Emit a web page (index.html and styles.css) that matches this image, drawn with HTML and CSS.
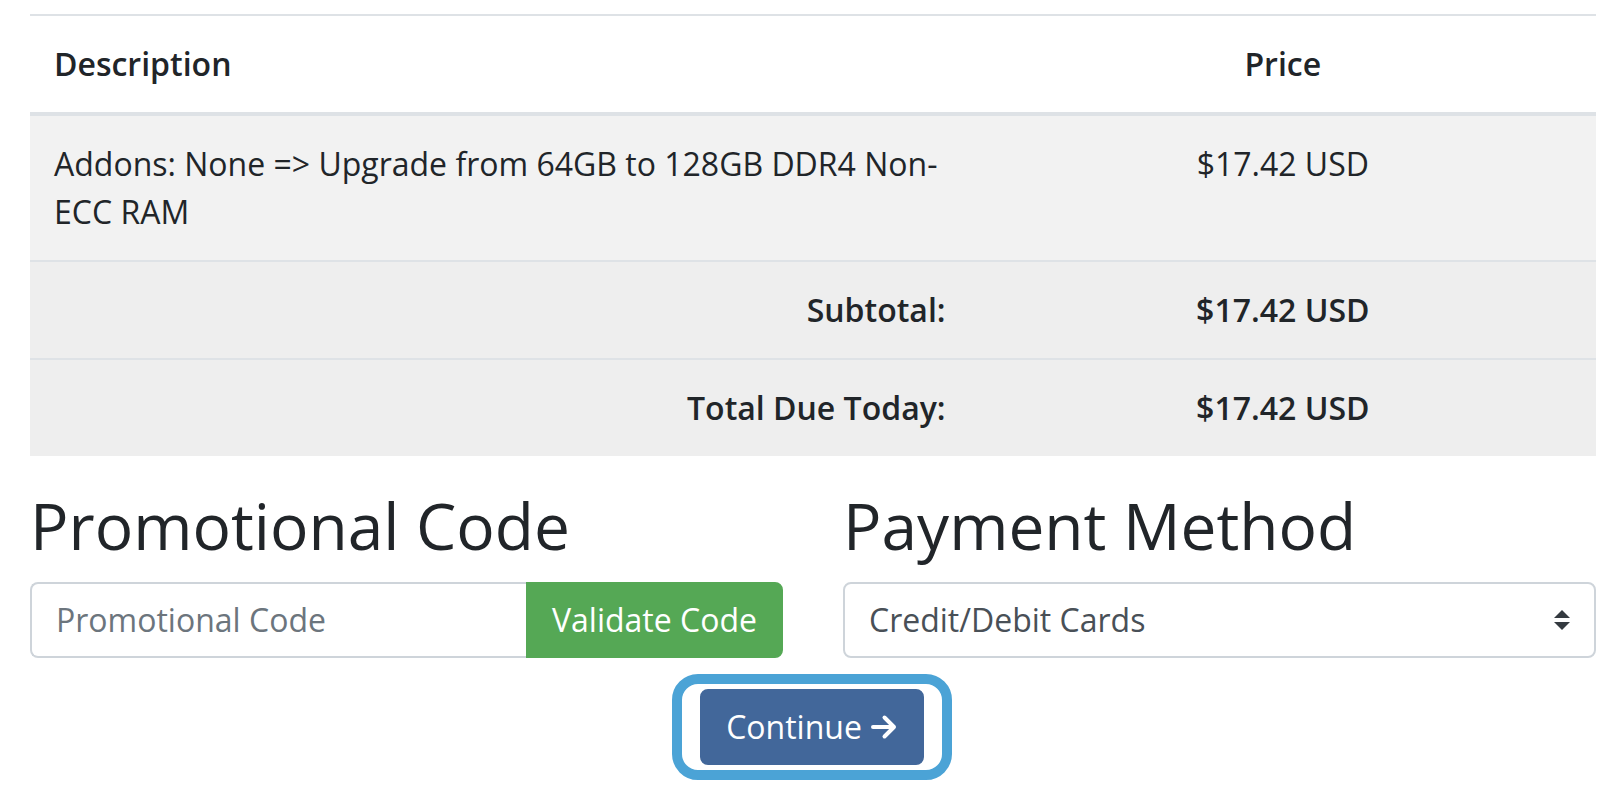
FILE: index.html
```html
<!DOCTYPE html>
<html lang="en">
<head>
<meta charset="utf-8">
<title>Order Summary</title>
<link rel="stylesheet" href="styles.css">
</head>
<body>
<div class="page">
  <table class="summary">
    <thead>
      <tr>
        <th class="col-desc">Description</th>
        <th class="col-price">Price</th>
      </tr>
    </thead>
    <tbody>
      <tr class="item">
        <td>Addons: None =&gt; Upgrade from 64GB to 128GB DDR4 Non-ECC RAM</td>
        <td class="center">$17.42 USD</td>
      </tr>
      <tr class="total">
        <td class="right strong">Subtotal:</td>
        <td class="center strong">$17.42 USD</td>
      </tr>
      <tr class="total">
        <td class="right strong">Total Due Today:</td>
        <td class="center strong">$17.42 USD</td>
      </tr>
    </tbody>
  </table>

  <div class="options">
    <div class="option">
      <h2 class="heading">Promotional Code</h2>
      <div class="input-group">
        <input class="control promo" type="text" placeholder="Promotional Code">
        <button class="btn-validate" type="button">Validate Code</button>
      </div>
    </div>
    <div class="option">
      <h2 class="heading">Payment Method</h2>
      <div class="select">
        <span class="select-text">Credit/Debit Cards</span>
        <svg class="select-caret" width="16" height="20" viewBox="0 0 4 5"><path d="M2 0L0 2h4zm0 5L0 3h4z" fill="#343a40"/></svg>
      </div>
    </div>
  </div>

  <div class="actions">
    <div class="focus-ring">
      <button class="btn-continue" type="button">Continue
        <svg class="arrow" width="28" height="26" viewBox="0 0 28 26"><path d="M3 13h21M14.5 3.5L24 13l-9.5 9.5" fill="none" stroke="#fff" stroke-width="4" stroke-linecap="round" stroke-linejoin="round"/></svg>
      </button>
    </div>
  </div>
</div>
</body>
</html>
```

FILE: styles.css
```css
* { box-sizing: border-box; }

html, body {
  margin: 0;
  padding: 0;
  background: #fff;
}

body {
  font-family: "Open Sans", "Noto Sans", sans-serif;
  font-size: 32px;
  line-height: 48px;
  color: #212529;
}

.page {
  width: 1566px;
  margin-left: 30px;
  padding-top: 14px;
}

.summary {
  width: 100%;
  border-collapse: collapse;
  margin-bottom: 32px;
}

.summary th,
.summary td {
  padding: 24px;
  vertical-align: top;
  border-top: 2px solid #dee2e6;
}

.summary th {
  font-weight: 600;
  text-align: left;
  border-bottom: 4px solid #dee2e6;
}

.summary thead th {
  background: #fff;
}

.col-desc { width: 60%; }
.col-price { width: 40%; }

.summary .col-price { text-align: center; }

.summary tbody tr:first-child td { border-top: 0; }

.item td { background: #f2f2f2; }
.total td { background: #eeeeee; }

.center { text-align: center; }
.right { text-align: right; }
.strong { font-weight: 600; }

.options {
  display: grid;
  grid-template-columns: 1fr 1fr;
  column-gap: 60px;
}

.heading {
  margin: 0 0 17px;
  font-size: 64px;
  line-height: 76.8px;
  font-weight: 400;
  color: #212529;
}

.input-group {
  display: flex;
  height: 76px;
}

.control {
  flex: 1;
  min-width: 0;
  height: 76px;
  margin: 0;
  padding: 0 24px;
  border: 2px solid #ced4da;
  border-right: 0;
  border-radius: 8px 0 0 8px;
  font-family: inherit;
  font-size: 32px;
  color: #495057;
  background: #fff;
  outline: none;
}

.control::placeholder { color: #6c757d; opacity: 1; }

.btn-validate {
  margin: 0;
  padding: 0 24px;
  border: 2px solid #55a855;
  border-radius: 0 8px 8px 0;
  background: #55a855;
  color: #fff;
  font-family: inherit;
  font-size: 32px;
  line-height: 48px;
}

.select {
  display: flex;
  align-items: center;
  justify-content: space-between;
  height: 76px;
  padding: 0 24px;
  border: 2px solid #ced4da;
  border-radius: 8px;
  color: #495057;
  background: #fff;
}

.select-caret { display: block; }

.actions {
  display: flex;
  justify-content: center;
  padding-top: 16px;
}

.focus-ring {
  padding: 5px 18px;
  border: 10px solid #4ba3d6;
  border-radius: 26px;
  margin-right: 2px;
}

.btn-continue {
  display: flex;
  align-items: center;
  gap: 8px;
  width: 224px;
  height: 76px;
  justify-content: center;
  margin: 0;
  padding: 0 24px;
  border: 2px solid #42679a;
  border-radius: 8px;
  background: #42679a;
  color: #fff;
  font-family: inherit;
  font-size: 32px;
  line-height: 48px;
}

.arrow { display: block; }
```
